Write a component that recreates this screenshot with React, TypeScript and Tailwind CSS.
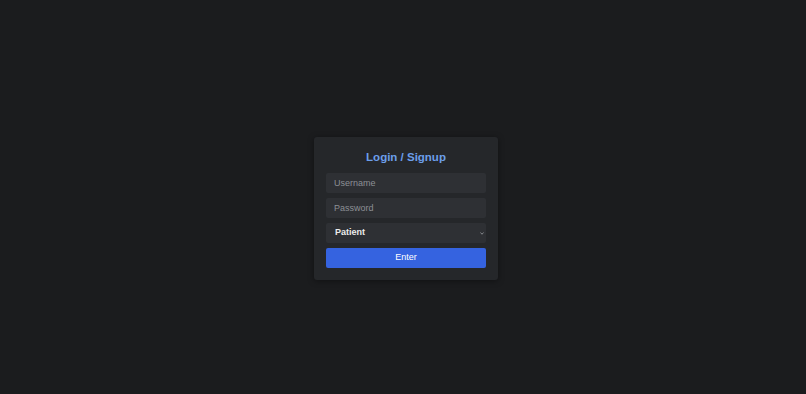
export default function App() {
  return (
    <div
      className="flex min-h-screen items-center justify-center bg-[#1b1c1e] pt-[23px] pl-[6px]"
      style={{ fontFamily: '"Liberation Sans", Arial, sans-serif' }}
    >
      <div className="w-[184px] rounded-[3px] bg-[#25272a] px-3 pt-[13px] pb-3 shadow-[0_1px_6px_rgba(0,0,0,0.4)]">
        <h1 className="mb-[9px] text-center text-[11.5px] leading-[14px] font-bold text-[#6c9ee9]">
          Login / Signup
        </h1>
        <div className="flex flex-col gap-[5px]">
          <input
            placeholder="Username"
            className="block h-[20px] w-full rounded-[2px] bg-[#2e3034] px-2 text-[9px] text-white outline-none placeholder:text-[#8c8f94]"
          />
          <input
            type="password"
            placeholder="Password"
            className="block h-[20px] w-full rounded-[2px] bg-[#2e3034] px-2 text-[9px] text-white outline-none placeholder:text-[#8c8f94]"
          />
          <div className="relative h-[20px]">
            <select className="block h-[20px] w-full appearance-none rounded-[2px] bg-[#2e3034] px-[9px] text-[9px] font-bold text-[#ececec] outline-none">
              <option>Patient</option>
              <option>Doctor</option>
            </select>
            <svg
              viewBox="0 0 10 10"
              className="pointer-events-none absolute top-[8px] right-[1px] h-[5px] w-[6px] text-[#a0a3a8]"
              fill="none"
              stroke="currentColor"
              strokeWidth="1.5"
            >
              <path d="M2 3 L5 6.5 L8 3" />
            </svg>
          </div>
          <button className="block h-[20px] w-full rounded-[2px] bg-[#3563e0] text-[9px] font-medium text-white">
            Enter
          </button>
        </div>
      </div>
    </div>
  );
}
